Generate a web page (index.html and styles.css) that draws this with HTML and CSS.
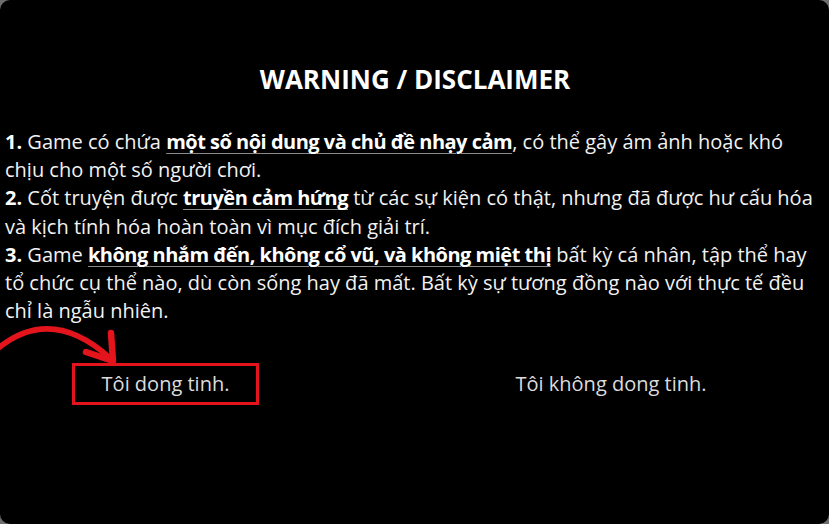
FILE: index.html
```html
<!DOCTYPE html>
<html lang="vi">
<head>
    <meta charset="UTF-8">
    <meta name="viewport" content="width=device-width, initial-scale=1.0">
    <title>Warning / Disclaimer</title>
    <link rel="stylesheet" href="styles.css">
</head>
<body>
    <div class="screen">
        <h1 class="title">WARNING / DISCLAIMER</h1>

        <p class="notice">
            <b>1.</b> Game có chứa <span class="key">một số nội dung và chủ đề nhạy cảm</span>, có thể gây ám ảnh hoặc khó chịu cho một số người chơi.<br>
            <b>2.</b> Cốt truyện được <span class="key">truyền cảm hứng</span> từ các sự kiện có thật, nhưng đã được hư cấu hóa và kịch tính hóa hoàn toàn vì mục đích giải trí.<br>
            <b>3.</b> Game <span class="key">không nhắm đến, không cổ vũ, và không miệt thị</span> bất kỳ cá nhân, tập thể hay tổ chức cụ thể nào, dù còn sống hay đã mất. Bất kỳ sự tương đồng nào với thực tế đều chỉ là ngẫu nhiên.
        </p>

        <div class="choices">
            <button class="choice choice-marked">Tôi dong tinh.</button>
            <button class="choice">Tôi không dong tinh.</button>
        </div>

        <!-- red hint arrow pointing at the accept button -->
        <svg class="hint-arrow" width="130" height="60" viewBox="0 0 130 60">
            <path d="M -4 30 Q 50 -16 110 38" fill="none" stroke="#e3141c" stroke-width="5.5" stroke-linecap="round"/>
            <path d="M 86 32 L 113 41 L 111 13" fill="none" stroke="#e3141c" stroke-width="6.5" stroke-linecap="round" stroke-linejoin="round"/>
        </svg>
    </div>
</body>
</html>
```

FILE: styles.css
```css
html, body {
    margin: 0;
    height: 100%;
    background: #6e6e6e;
}
.screen {
    position: relative;
    box-sizing: border-box;
    height: 524px;
    padding: 59px 4px 0 5px;
    background: #000;
    border-radius: 10px;
    color: #f2f2f2;
    font-family: "Open Sans", "Noto Sans", sans-serif;
    overflow: hidden;
}
.title {
    margin: 0;
    text-align: center;
    font-size: 26px;
    font-weight: 700;
    line-height: 40px;
    color: #fff;
}
.notice {
    margin: 29px 0 0;
    font-size: 20px;
    line-height: 28.2px;
}
.notice b {
    font-weight: 700;
    color: #fff;
}
.key {
    font-weight: 700;
    color: #fff;
    letter-spacing: -0.5px;
    text-decoration: underline;
    text-decoration-color: #8a8a8a;
    text-underline-offset: 4px;
    text-decoration-thickness: 1px;
}
.choices {
    display: flex;
    margin-top: 38px;
    padding-left: 67px;
}
.choice {
    font-family: inherit;
    font-size: 20px;
    color: #dcdcdc;
    background: none;
    border: 3px solid transparent;
    padding: 0 0 2px;
    height: 42px;
    cursor: pointer;
}
.choice-marked {
    width: 187px;
    border-color: #e3141c;
}
.choice + .choice {
    margin-left: 245px;
    width: 214px;
}
.hint-arrow {
    position: absolute;
    left: 0;
    top: 320px;
}
```
